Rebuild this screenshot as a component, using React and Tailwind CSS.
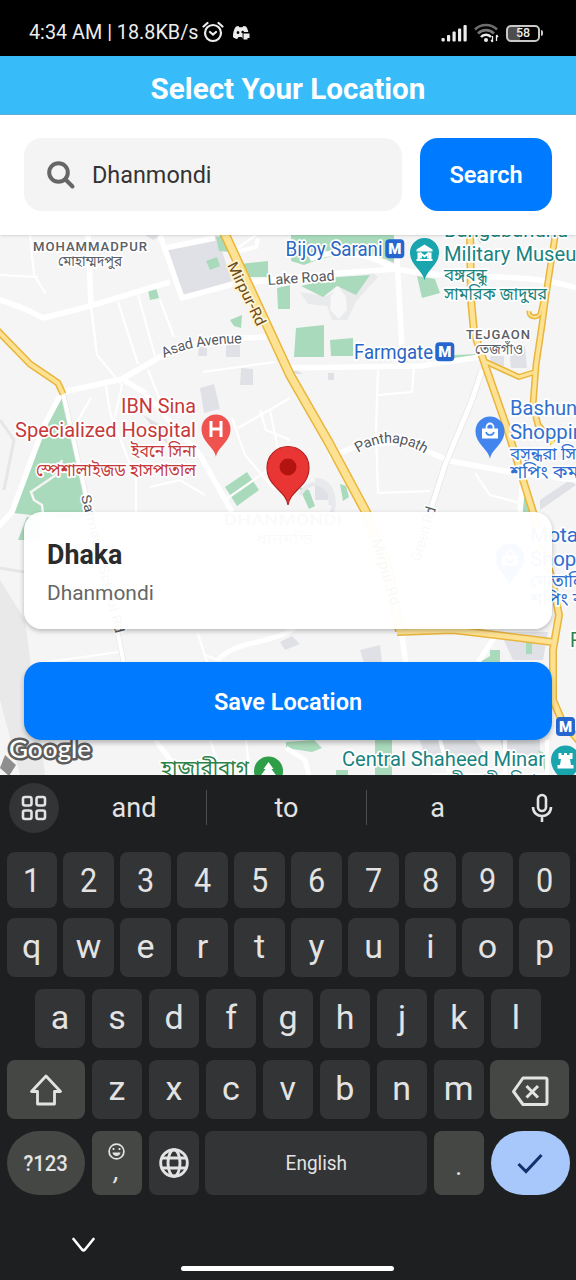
import React from "react";

const FONT = "Roboto, 'Noto Sans Bengali', 'Liberation Sans', sans-serif";

function StatusBar() {
  return (
    <div className="flex h-14 items-end justify-between bg-black pr-[33px] pl-[29px] pb-[10px] text-[#ececec]">
      <div className="flex h-[26px] items-center">
        <span className="w-[172px] text-[19.8px] whitespace-nowrap">4:34 AM | 18.8KB/s</span>
        <svg className="ml-[1px] -mt-[2px] h-[22px] w-[22px]" viewBox="0 0 22 22" fill="none" stroke="currentColor" strokeWidth="2.200" strokeLinecap="round">
          <circle cx="11" cy="12" r="8" />
          <path d="M1.500 5.500 5.500 2M20.500 5.500 16.500 2M8 11l3 2.500 3-2.500" />
        </svg>
        <svg className="ml-[8px] h-[16px] w-[18px]" viewBox="0 0 18 16" fill="currentColor">
          <path d="M4 1.500 6.500 1l.8 1.200h3L11.500 1l2.500.6c1.300 1.800 2 3.400 2.300 5.400H12.500c-1.300 0-1.900.8-1.900 2v4.500L9.500 12H6.500l-1.300 2C3.500 13.700 2 13 1 12 .9 8 1.700 4.500 4 1.500Z" />
          <path d="M11.500 8.500h6v4.500h-2V14.500h-4Z" />
          <ellipse cx="6" cy="7.500" rx="1.300" ry="1.500" fill="#000" />
          <ellipse cx="10.700" cy="7" rx="1.300" ry="1.300" fill="#000" />
        </svg>
      </div>
      <div className="flex h-[26px] items-center">
        <svg className="h-[18px] w-[27px]" viewBox="0 0 27 18" fill="currentColor">
          <rect x="0.500" y="14" width="3.200" height="3.500" rx="1" />
          <rect x="6" y="11" width="3.200" height="6.500" rx="1" />
          <rect x="11.500" y="7.500" width="3.200" height="10" rx="1" />
          <rect x="17" y="4.500" width="3.200" height="13" rx="1" />
          <rect x="22.500" y="1" width="3.200" height="16.500" rx="1" />
        </svg>
        <svg className="ml-[5px] h-[20px] w-[26px]" viewBox="0 0 26 20" fill="none" strokeWidth="2.600">
          <path d="M2 6.500C8 .5 18 .5 24 6.500" stroke="#6d6d6d" />
          <path d="M5 10.500c4.500-4.500 11.500-4.500 16 0" stroke="#777" />
          <path d="M8 14c2.500-3 7.500-3 10 0" stroke="#ececec" />
          <circle cx="13" cy="17" r="2" fill="#ececec" />
          <path d="M19.500 13v6M23.500 12v6M18 17l1.500 2M23.500 12l1.500 2" stroke="#ececec" strokeWidth="1.300" />
        </svg>
        <div className="ml-[7px] flex h-[17px] w-[34px] items-center justify-center rounded-[5px] border-2 border-[#c8c8c8] bg-[linear-gradient(90deg,#4d4d4d_40%,#000_40%)] text-[12.5px] leading-none font-medium">58</div>
        <div className="ml-px h-[6px] w-[2px] rounded-r bg-[#c8c8c8]" />
      </div>
    </div>
  );
}

function Pin({ x, y, fill, children }) {
  return (
    <g transform={`translate(${x} ${y})`}>
      <path d="M0 28C-1.500 18-14.500 13-14.500 0A14.500 14.500 0 1 1 14.500 0C14.500 13 1.500 18 0 28Z" fill={fill} />
      {children}
    </g>
  );
}

function Metro({ x, y }) {
  return (
    <g>
      <rect x={x} y={y} width="19" height="19" rx="4" fill="#2566cf" />
      <text x={x + 9.5} y={y + 14.8} fontSize="15" fontWeight="900" fill="#fff" textAnchor="middle">M</text>
    </g>
  );
}

function Label({ x, y, w, size = 20, fill, anchor = "start", children, ...rest }) {
  return (
    <text x={x} y={y} textLength={w} lengthAdjust="spacingAndGlyphs" fontSize={size} fill={fill} textAnchor={anchor} stroke="#fff" strokeWidth="3.500" strokeLinejoin="round" paintOrder="stroke" {...rest}>
      {children}
    </text>
  );
}

function Bag() {
  return (
    <g>
      <path d="M-8-2.500H8V7.500H-8Z" fill="#fff" />
      <path d="M-3.500-2V-4a3.500 3.500 0 0 1 7 0V-2" fill="none" stroke="#fff" strokeWidth="1.800" />
      <path d="M-4 1c1 4 7 4 8 0" fill="none" stroke="#4285f4" strokeWidth="1.600" />
    </g>
  );
}

const YELLOW = [
  ["M223 230 290 375 329 443 366 512 388 570 400 631", 10],
  ["M397 632 453 630 496 635 552 642", 8],
  ["M-4 329 30 364 58 383 63 394", 7],
  ["M470 230 471 299 474 332 484 362 506 425 533 512 552 580 559 615 553 650 553 700 562 721 580 742", 8],
  ["M556 230 546 295 542 325 536 365 533 405 538 425 553 443", 7],
  ["M543 300 540 314C536 319 528 317 529 311", 5],
  ["M484 361 519 377 535 372", 6],
];

const WHITE_MAIN = [
  "M-2 299 25 309 43 318 90 306 170 282",
  "M160 235 182 298 233 284 263 281 340 273 396 269",
  "M165 248 215 238",
  "M88 235 91 306",
  "M63 392 122 379 160 357 205 340 266 337",
  "M122 379 145 393 200 455 232 512",
  "M396 240 403 366",
  "M286 368 420 366 480 357",
  "M-2 527 12 512 44 426 62 392",
  "M329 457 360 445 405 442 450 461 510 472 576 480",
  "M310 259C335 248 365 252 396 269",
  "M396 269C460 282 520 270 576 288",
  "M401 630 406 664",
  "M520 512 523 478",
];
const WHITE_THIN = [
  "M30 235 34 275 46 294", "M0 275 38 277", "M91 306 97 355 122 385 112 430", "M118 302 138 364", "M138 295 155 356",
  "M160 300 174 337", "M148 370 160 400", "M203 372 275 362", "M91 398 75 425", "M105 380 110 412 136 480 136 512",
  "M238 428 290 398", "M270 410 278 450 266 470", "M225 500 275 465", "M150 487 180 480 205 495", "M260 410 266 430 290 440",
  "M378 370 376 430 378 493 430 491", "M378 395 412 392 414 368", "M475 473 490 495 520 503", "M232 418 245 455 275 490",
  "M198 634 207 662", "M40 663 119 652", "M260 232 235 250", "M205 655 218 660", "M246 740 250 775", "M210 740 222 775",
];

function CityMap() {
  return (
    <svg className="absolute inset-0 h-full w-full" viewBox="0 235 576 540" fontFamily={FONT}>
      <defs>
        <path id="asad" d="M164 358C185 347 210 344 246 343" />
        <path id="pantha" d="M358 453C380 439 403 439 428 456" />
      </defs>
      <rect y="235" width="576" height="540" fill="#f5f5f5" />
      <path d="M0 580 25 620 45 775H20L0 700Z" fill="#e9e9ea" />
      <path d="M0 420 14 440 4 490M0 568 24 572" fill="none" stroke="#e6e6e8" strokeWidth="3" />
      <g fill="#e0e1e6">
        <path d="M167 247 217 235 232 282 184 297Z" />
        <path d="M145 235h18l-10 5ZM199 347h8v9h-9ZM226 345h14v12h-14ZM241 368l12 1v16h-13ZM200 388l14-4 6 25-16 4ZM143 415 164 427 168 445Z" />
        <path d="M490 356h14v10h-13ZM509 348l16-2 2 22h-16ZM292 367 303 374H292ZM328 373h6v7h-6Z" />
      </g>
      <g fill="#e9eaec">
        <path d="M300 292 326 296 372 272 378 277 357 300 347 320H332l-5-14-19-2Z" />
      </g>
      <g fill="#e0e1e6">
        <path d="M315 485l10-3 4 18h-14ZM540 500 570 480 576 485 540 510ZM360 650l20-5 2 18h-18Z" />
        <path d="M500 632h48l-5 28h-30ZM420 740h55l14 20H425ZM500 740h40v18h-35ZM280 642l12-6 8 8-15 6Z" />
      </g>
      <g fill="#a9dabb">
        <path d="M216 237 224 235 230 252 219 251ZM206 261l11-4 3 9-10 4ZM240 264 268 261V277H244ZM148 290l8-2 3 10-9 2ZM277 288l13-3v24h-12ZM230 320l12-5-1 13-7-2Z" />
        <path d="M291 235H394V263C365 248 330 254 304 265L291 261Z" />
        <path d="M301 286 337 277 370 275 356 295 337 286 323 297ZM417 276l18 3 5 14-18 5ZM296 328l28-3v32h-30ZM330 340l23-2v18h-22ZM453 355l25-1v4l-25 2ZM475 235h15l-10 8Z" />
        <path d="M62 398 82 480 87 512 80 520 13 513 44 426ZM225 487l22-15 12 18-22 16ZM299 487l10 3 6 16-6 3ZM340 484l6 2 3 11-6 4ZM520 512l3-28 7 28Z" />
        <path d="M18 540 27 517 40 520V540ZM480 662l20-12 0 12ZM490 650l10 0v12h-10ZM526 640h6v14h-6ZM286 742l28-2 8 8-10 4-26-4ZM375 740h17v35h-17ZM336 770h12v5h-12ZM538 750l8 4v20Z" />
      </g>
      <path d="M331 296 338 286 346 297 347 310 339 319 330 310Z" fill="#f7f7f7" />
      <path d="M315 480C335 478 340 512 325 520M300 495C310 475 335 485 330 505" stroke="#e8e9ec" strokeWidth="4" fill="none" />
      <path d="M62 460 56 475 31 492 34 500 42 505 43 514" fill="none" stroke="#f5f5f5" strokeWidth="2.500" />
      <g fill="none" stroke="#fff" strokeLinejoin="round">
        {WHITE_THIN.map((d) => <path key={d} d={d} strokeWidth="2.200" />)}
        {WHITE_MAIN.map((d) => <path key={d} d={d} strokeWidth="5.500" />)}
        <path d="M482 370 472 400 445 465 430 512 410 580" stroke="#e4e5e8" strokeWidth="6.500" />
        <path d="M482 370 472 400 445 465 430 512 410 580" strokeWidth="5" />
        <path d="M63 393 87 500 105 570 124 664" stroke="#e6e7e9" strokeWidth="5.500" />
        <path d="M63 393 87 500 105 570 124 664" strokeWidth="4" />
        <path d="M218 660C235 640 270 645 295 628M286 748 305 760 309 775M155 740 172 762M494 638 478 662" strokeWidth="5" />
        <path d="M547 740V775M440 740 450 775M505 740V775" strokeWidth="4" />
        <path d="M232 253 256 247 258 238" strokeWidth="4" />
      </g>
      <g fill="none" strokeLinejoin="round">
        {YELLOW.map(([d, w]) => <path key={d} d={d} stroke="#e9b53c" strokeWidth={w} />)}
        {YELLOW.map(([d, w]) => <path key={d} d={d} stroke="#fde293" strokeWidth={w - 3} />)}
      </g>
      <path d="M5 755 16 765 9 776 0 768Z" fill="#8e8e8e" />

      <Label x="33" y="251" w="115" size="13.500" fill="#5c6066" fontWeight="500" letterSpacing="1">MOHAMMADPUR</Label>
      <Label x="58" y="266" w="64" size="13.500" fill="#5c6066">মোহাম্মদপুর</Label>
      <Label x="466" y="338.500" w="65" size="13.500" fill="#5c6066" fontWeight="500" letterSpacing="1">TEJGAON</Label>
      <Label x="475" y="354" w="48" size="13.500" fill="#5c6066">তেজগাঁও</Label>
      <Label x="268" y="285" w="67" size="14.500" fill="#55585c" transform="rotate(-4 268 285)">Lake Road</Label>
      <text fontSize="14.500" fill="#55585c" stroke="#fff" strokeWidth="3" paintOrder="stroke"><textPath href="#asad" textLength="80">Asad Avenue</textPath></text>
      <text fontSize="14.500" fill="#55585c" stroke="#fff" strokeWidth="3" paintOrder="stroke"><textPath href="#pantha" textLength="71">Panthapath</textPath></text>
      <Label x="227" y="265" w="69" size="15" fill="#6b4c23" stroke="#fff4d2" transform="rotate(64 227 265)">Mirpur-Rd</Label>
      <Label x="372" y="540" w="69" size="14.500" fill="#6b4c23" stroke="#fff4d2" transform="rotate(74 372 540)">Mirpur Rd</Label>
      <Label x="81" y="496" w="142" size="13.500" fill="#55585c" transform="rotate(76 81 496)">Satmasjid School Rd</Label>
      <Label x="420" y="562" w="56" size="14.500" fill="#55585c" transform="rotate(-73 420 562)">Green Rd</Label>
      <Label x="224" y="525" w="118" size="15" fill="#7d8085" fontWeight="500">DHANMONDI</Label>
      <Label x="256" y="544" w="57" size="14" fill="#7d8085">ধানমন্ডি</Label>

      <Label x="285.500" y="256" w="97" fill="#2a66c4">Bijoy Sarani</Label>
      <Label x="354" y="359" w="79" fill="#2a66c4">Farmgate</Label>
      <Metro x={385.300} y={239.300} />
      <Metro x={435.300} y={342.300} />
      <Metro x={556} y={717} />

      <Label x="444" y="237" w="124" fill="#19837f">Bangabandhu</Label>
      <Label x="444" y="261" w="150" fill="#19837f">Military Museum</Label>
      <Label x="444" y="281" w="43" size="17" fill="#19837f">বঙ্গবন্ধু</Label>
      <Label x="444" y="300" w="103" size="17" fill="#19837f">সামরিক জাদুঘর</Label>
      <Pin x={424.500} y={252.500} fill="#18a5ae">
        <path d="M-8-3 0-8 8-3V-1H-8ZM-7 0h2.500v7H-7ZM4.500 0H7v7H4.500ZM-8 6.500H8V8.500H-8Z" fill="#fff" />
        <path d="M-3.500 6V1L0 4 3.500 1V6" fill="none" stroke="#fff" strokeWidth="1.800" />
      </Pin>

      <Label x="121" y="413" w="75" fill="#c5393b">IBN Sina</Label>
      <Label x="15" y="437" w="181" fill="#c5393b">Specialized Hospital</Label>
      <Label x="131" y="457" w="65" size="17" fill="#c5393b">ইবনে সিনা</Label>
      <Label x="36" y="476" w="160" size="17" fill="#c5393b">স্পেশালাইজড হাসপাতাল</Label>
      <Pin x={216} y={429} fill="#ee5350">
        <path d="M-5-8V8M5-8V8M-5 0H5" stroke="#fff" strokeWidth="3" fill="none" />
      </Pin>

      <Label x="510" y="415" w="118" fill="#2f6fd0">Bashundhara</Label>
      <Label x="510" y="439" w="125" fill="#2f6fd0">Shopping City</Label>
      <Label x="510" y="460" w="80" size="17" fill="#2f6fd0">বসুন্ধরা সিটি</Label>
      <Label x="510" y="478" w="104" size="17" fill="#2f6fd0">শপিং কমপ্লেক্স</Label>
      <Pin x={490} y={431} fill="#4285ef"><Bag /></Pin>

      <Label x="530" y="542" w="76" fill="#2f6fd0">Motaleb</Label>
      <Label x="530" y="566" w="129" fill="#2f6fd0">Shopping Mall</Label>
      <Label x="530" y="587" w="66" size="17" fill="#2f6fd0">মোতালিব</Label>
      <Label x="530" y="605" w="104" size="17" fill="#2f6fd0">শপিং কমপ্লেক্স</Label>
      <Pin x={510} y={558} fill="#4285ef"><Bag /></Pin>

      <Label x="570" y="647" w="60" fill="#2c8148">Ramna</Label>
      <Label x="161" y="775" w="88" size="20" fill="#2c8148">হাজারীবাগ</Label>
      <Pin x={268.500} y={771} fill="#2f9e49">
        <path d="M0-9 5-2H3L8 5H-8L-3-2H-5Z" fill="#fff" />
      </Pin>
      <Label x="342" y="766" w="203" fill="#19837f">Central Shaheed Minar</Label>
      <Label x="430" y="786" w="115" size="17" fill="#19837f">কেন্দ্রীয় শহীদ মিনার</Label>
      <Pin x={565.500} y={760} fill="#18a5ae">
        <path d="M-7-7h3v2h2.500V-7h3v2H4V-7H7V-1H4.500L5.500 5H8V8.500H-8V5H-5.500L-4.500-1H-7Z" fill="#fff" />
      </Pin>

      <path d="M288 505C286 490 267 487 267 467.500A21 21 0 1 1 309 467.500C309 487 290 490 288 505Z" fill="#ea3535" stroke="#b3201e" strokeWidth="1.200" />
      <circle cx="288" cy="467" r="8.500" fill="#b31412" />
      <text x="9" y="758" fontSize="25" fontWeight="500" fontFamily="Lato, sans-serif" textLength="82" lengthAdjust="spacingAndGlyphs" fill="#fff" stroke="#5d5d5d" strokeWidth="5" strokeLinejoin="round" paintOrder="stroke">Google</text>
    </svg>
  );
}

function Key({ children, className = "" }) {
  return (
    <div className={`flex min-w-0 items-center justify-center rounded-[8px] text-[34px] leading-none ${className || "flex-1 bg-[#333436]"}`}>
      {children}
    </div>
  );
}

function Letters({ text }) {
  return text.split("").map((c) => (
    <Key key={c}><span className="-mt-1">{c}</span></Key>
  ));
}

function Digits() {
  return "1234567890".split("").map((c) => (
    <Key key={c}><span className="-mt-px scale-x-90">{c}</span></Key>
  ));
}

function Keyboard() {
  return (
    <div className="relative h-[505px] bg-[#1e1f21] text-[#e3e3e3]">
      <div className="flex h-[65px] items-center text-[27px]">
        <div className="ml-[9px] flex h-[50px] w-[50px] items-center justify-center rounded-full bg-[#333436]">
          <svg className="h-[26px] w-[26px]" viewBox="0 0 26 26" fill="none" stroke="currentColor" strokeWidth="2.600">
            <rect x="2" y="2" width="8.500" height="8.500" rx="2" />
            <rect x="15.500" y="2" width="8.500" height="8.500" rx="2" />
            <rect x="2" y="15.500" width="8.500" height="8.500" rx="2" />
            <rect x="15.500" y="15.500" width="8.500" height="8.500" rx="2" />
          </svg>
        </div>
        <div className="ml-[3px] w-[144px] pt-[2px] text-center">and</div>
        <div className="h-[35px] w-px bg-[#4b4c4f]" />
        <div className="w-[159px] pt-[2px] text-center">to</div>
        <div className="h-[35px] w-px bg-[#4b4c4f]" />
        <div className="w-[141px] pt-[2px] text-center">a</div>
        <svg className="ml-[22px] h-[30px] w-[24px]" viewBox="0 0 24 30" fill="none" stroke="currentColor" strokeWidth="2.600">
          <rect x="8" y="2" width="8" height="16" rx="4" />
          <path d="M3 14c0 12 18 12 18 0M12 22v7" />
        </svg>
      </div>
      <div className="flex flex-col px-[6.5px] pt-[12px]">
        <div className="flex h-[56px] gap-[6.8px]"><Digits /></div>
        <div className="mt-[10px] flex h-[59px] gap-[6.8px]"><Letters text="qwertyuiop" /></div>
        <div className="mt-[12px] flex h-[59px] gap-[6.8px] px-[28.5px]"><Letters text="asdfghjkl" /></div>
        <div className="mt-[12px] flex h-[59px] gap-[6.8px]">
          <Key className="w-[78.5px] bg-[#454745]">
            <svg className="h-[34px] w-[34px]" viewBox="0 0 34 34" fill="none" stroke="currentColor" strokeWidth="2.800" strokeLinejoin="round">
              <path d="M17 3 31.500 18.500H25.500V31H8.500V18.500H2.500Z" />
            </svg>
          </Key>
          <Letters text="zxcvbnm" />
          <Key className="w-[79px] bg-[#454745]">
            <svg className="mt-[2px] h-[32px] w-[38px]" viewBox="0 0 38 32" fill="none" stroke="currentColor" strokeWidth="3" strokeLinejoin="round">
              <path d="M12 3H34Q36 3 36 4.500V28Q36 29.500 34 29.500H12L2.500 16.500ZM15.500 11 27 22.500M27 11 15.500 22.500" />
            </svg>
          </Key>
        </div>
        <div className="mt-[12px] flex h-[64px] gap-[6.8px]">
          <Key className="w-[78.5px] rounded-full bg-[#454745]"><span className="-ml-px scale-x-90 text-[22.5px] font-medium">?123</span></Key>
          <Key className="w-[50px] flex-col bg-[#454745]">
            <svg className="h-[17px] w-[17px]" viewBox="0 0 17 17" fill="none" stroke="currentColor" strokeWidth="1.700">
              <circle cx="8.500" cy="8.500" r="7.400" />
              <path d="M4.500 9.500h8c-.5 4.500-7.500 4.500-8 0Z" fill="currentColor" stroke="none" />
              <path d="M5.500 5v2M11.500 5v2" />
            </svg>
            <span className="-mt-[2px] text-[26px] italic">,</span>
          </Key>
          <Key className="w-[50px] bg-[#333436]">
            <svg className="h-[30px] w-[30px]" viewBox="0 0 30 30" fill="none" stroke="currentColor" strokeWidth="2.900">
              <circle cx="15" cy="15" r="13.300" />
              <ellipse cx="15" cy="15" rx="6" ry="13.300" />
              <path d="M3 10h24M3 20h24" />
            </svg>
          </Key>
          <Key className="flex-1 bg-[#333436]"><span className="scale-x-95 text-[20px]">English</span></Key>
          <Key className="w-[50px] bg-[#454745]"><span className="mt-[6px] text-[26px]">.</span></Key>
          <Key className="w-[79px] rounded-full bg-[#a8c7fa]">
            <svg className="mt-px h-[22px] w-[28px]" viewBox="0 0 28 22" fill="none" stroke="#12306b" strokeWidth="3">
              <path d="M2.500 11 10 18.500 25.500 2" />
            </svg>
          </Key>
        </div>
      </div>
      <div className="flex justify-start pt-[42px] pl-[72px]">
        <svg className="h-[16px] w-[23px]" viewBox="0 0 23 16" fill="none" stroke="#fff" strokeWidth="2.600" strokeLinecap="round" strokeLinejoin="round">
          <path d="M1.500 2 10 12.500Q11.500 14 13 12.500L21.500 2" />
        </svg>
      </div>
      <div className="ml-[181px] mt-[13px] h-[5px] w-[213px] rounded-full bg-white" />
    </div>
  );
}

export default function App() {
  return (
    <div className="flex h-[1280px] w-[576px] flex-col overflow-hidden bg-white font-['Roboto','Noto_Sans_Bengali',sans-serif]">
      <StatusBar />
      <header className="flex h-[59px] items-center justify-center border-b border-[#5fb0dc] bg-[#38bcf9] pt-[9px] text-[29.6px] font-bold text-white">
        Select Your Location
      </header>
      <div className="z-10 flex h-[120px] gap-[18px] bg-white px-6 pt-[23px] shadow-sm">
        <div className="flex h-[73px] w-[378px] items-center rounded-[18px] bg-[#f4f4f4] pl-[22px]">
          <svg className="mt-px h-[30px] w-[30px]" viewBox="0 0 30 30" fill="none" stroke="#666" strokeWidth="4" strokeLinecap="round">
            <circle cx="12.500" cy="12.500" r="9.300" />
            <path d="M19.500 19.500 26.500 26.500" />
          </svg>
          <span className="ml-[16px] pt-[2px] text-[23.4px] text-[#333]">Dhanmondi</span>
        </div>
        <div className="flex h-[73px] w-[132px] items-center justify-center rounded-[18px] bg-[#007bff] pt-[2px] text-[23.5px] font-semibold text-white">Search</div>
      </div>
      <main className="relative flex h-[540px] flex-col overflow-hidden px-6">
        <CityMap />
        <section className="relative mt-[277px] h-[117px] rounded-[18px] bg-white/96 px-[23px] pt-[25px] shadow-[0_2px_5px_rgba(0,0,0,0.25)]">
          <h2 className="text-[26.8px] leading-[36px] font-bold text-[#2b2b2b]">Dhaka</h2>
          <p className="mt-[5px] text-[20.9px] leading-[30px] text-[#666]">Dhanmondi</p>
        </section>
        <button className="relative mt-[33px] h-[78px] rounded-[18px] bg-[#007bff] pt-[3px] text-[23.5px] font-semibold text-white shadow-[0_3px_5px_rgba(0,0,0,0.25)]">Save Location</button>
      </main>
      <Keyboard />
    </div>
  );
}
